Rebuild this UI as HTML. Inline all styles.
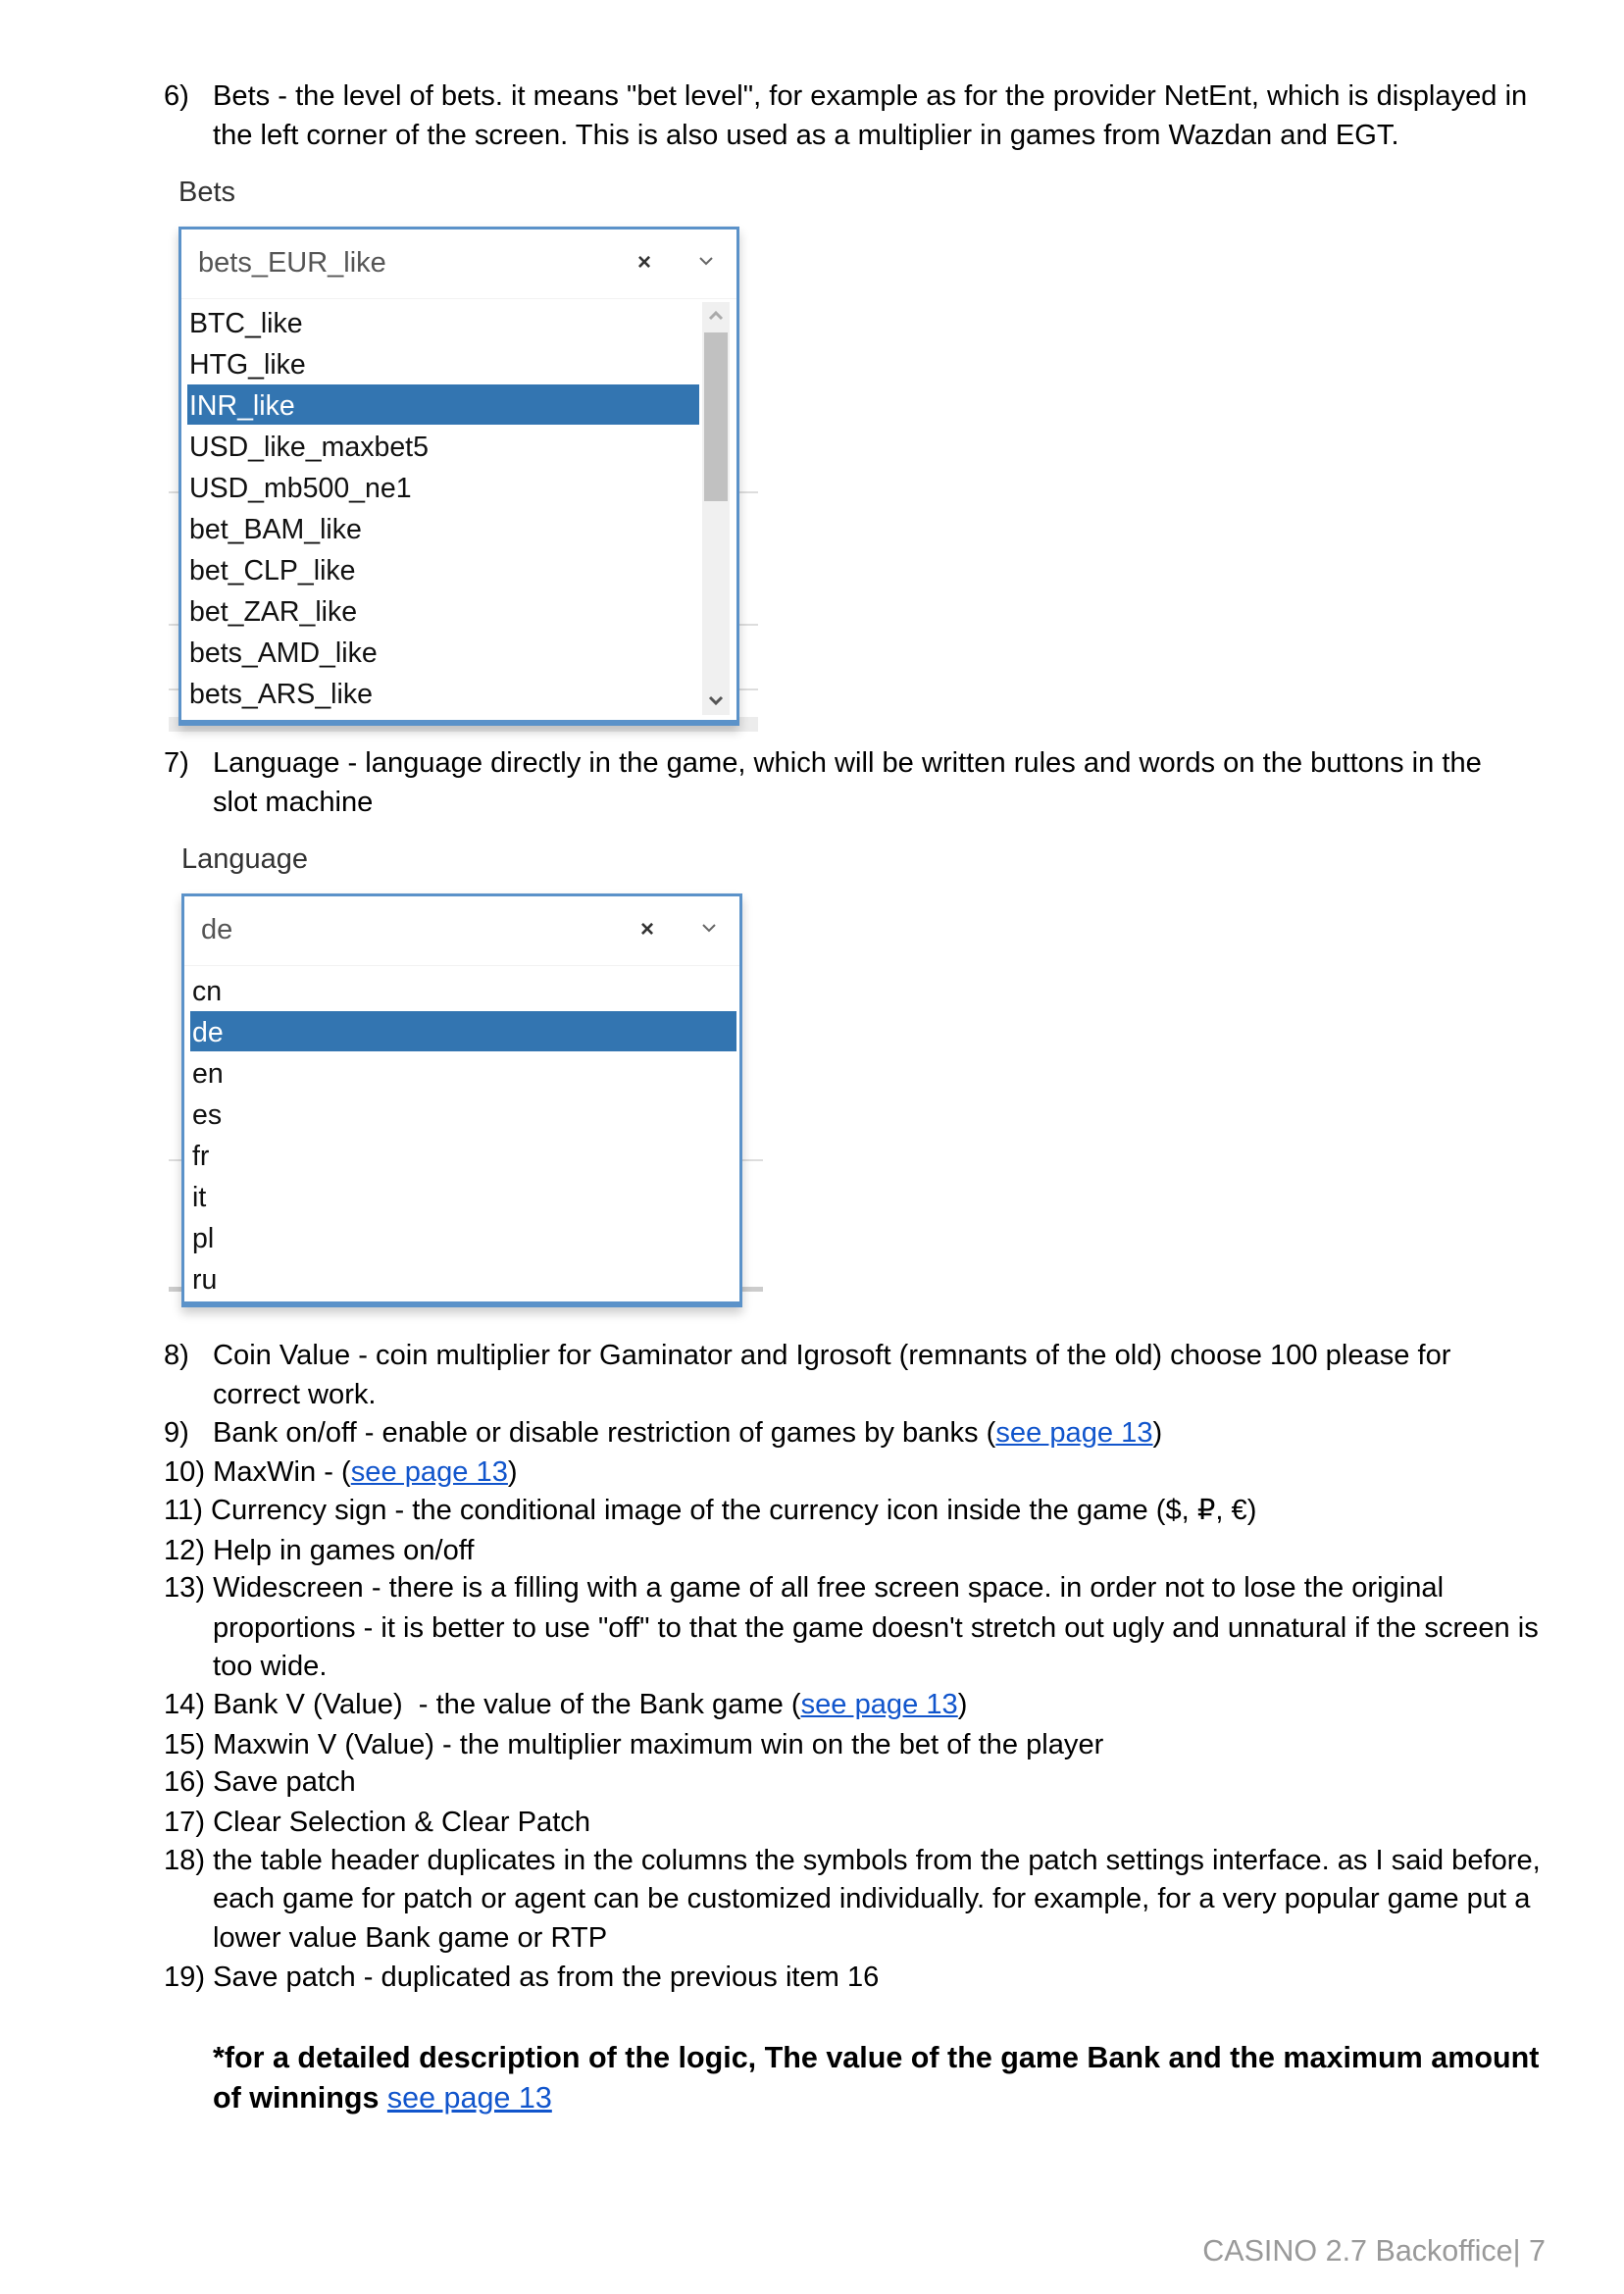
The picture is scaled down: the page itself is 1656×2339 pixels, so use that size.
<!DOCTYPE html>
<html><head><meta charset="utf-8"><style>
body{margin:0;width:1656px;height:2339px;background:#fff;position:relative;font-family:"Liberation Sans",Arial,sans-serif;color:#000;overflow:hidden}
.l{position:absolute;font-size:29.1px;line-height:40px;white-space:nowrap}
.n{left:167px}.t{left:217px}
a{color:#1155cc;text-decoration:underline}
.box{position:absolute;background:#fff;border:3px solid #5b92c9;border-bottom-width:6px;box-sizing:border-box;box-shadow:0 6px 10px rgba(0,0,0,.2)}
.hd{position:absolute;left:0;right:0;top:0;height:70px;border-bottom:1px solid #f2f2f2}
.hv{position:absolute;left:17px;font-size:29px;color:#555;line-height:40px}
.it{position:absolute;left:8px;font-size:28.5px;line-height:42px;color:#111;white-space:nowrap}
.hl{position:absolute;background:#3375b1}
.gl{position:absolute;background:#ddd;height:2px}
.lab{position:absolute;font-size:29px;color:#333;line-height:40px}
</style></head><body>

<div class="l n" style="top:78px">6)</div>
<div class="l t" style="top:78px">Bets - the level of bets. it means "bet level", for example as for the provider NetEnt, which is displayed in</div>
<div class="l t" style="top:118px">the left corner of the screen. This is also used as a multiplier in games from Wazdan and EGT.</div>

<div class="lab" style="left:182px;top:176px">Bets</div>
<div class="gl" style="left:172px;width:601px;top:501px"></div>
<div class="gl" style="left:172px;width:601px;top:636px"></div>
<div class="gl" style="left:172px;width:601px;top:702px"></div>
<div style="position:absolute;left:172px;width:601px;top:731px;height:15px;background:#ececec"></div>
<div class="box" style="left:182px;top:231px;width:572px;height:509px">
 <div class="hd"><div class="hv" style="top:14px">bets_EUR_like</div>
 <div style="position:absolute;left:465px;top:14px;font-size:24px;line-height:40px;color:#333;font-weight:bold">×</div>
 <svg style="position:absolute;left:527px;top:26px" width="16" height="12"><path d="M2 3l6 6 6-6" stroke="#666" stroke-width="2" fill="none"/></svg></div>
 <div class="hl" style="left:6px;top:158px;width:522px;height:41px"></div>
 <div style="position:absolute;left:531px;top:74px;width:28px;height:421px;background:#f0f0f0"></div>
 <div style="position:absolute;left:533px;top:105px;width:24px;height:172px;background:#c1c1c1"></div>
 <svg style="position:absolute;left:537px;top:82px" width="16" height="12"><path d="M2 9l6-6 6 6" stroke="#aaa" stroke-width="3" fill="none"/></svg>
 <svg style="position:absolute;left:537px;top:474px" width="16" height="12"><path d="M2 3l6 6 6-6" stroke="#555" stroke-width="3" fill="none"/></svg>
 <div class="it" style="top:75px">BTC_like</div>
 <div class="it" style="top:117px">HTG_like</div>
 <div class="it" style="top:159px;color:#fff">INR_like</div>
 <div class="it" style="top:201px">USD_like_maxbet5</div>
 <div class="it" style="top:243px">USD_mb500_ne1</div>
 <div class="it" style="top:285px">bet_BAM_like</div>
 <div class="it" style="top:327px">bet_CLP_like</div>
 <div class="it" style="top:369px">bet_ZAR_like</div>
 <div class="it" style="top:411px">bets_AMD_like</div>
 <div class="it" style="top:453px">bets_ARS_like</div>
</div>

<div class="l n" style="top:758px">7)</div>
<div class="l t" style="top:758px">Language - language directly in the game, which will be written rules and words on the buttons in the</div>
<div class="l t" style="top:798px">slot machine</div>

<div class="lab" style="left:185px;top:856px">Language</div>
<div class="gl" style="left:172px;width:606px;top:1182px"></div>
<div style="position:absolute;left:172px;width:606px;top:1312px;height:5px;background:#ccc"></div>
<div class="box" style="left:185px;top:911px;width:572px;height:422px">
 <div class="hd"><div class="hv" style="top:14px">de</div>
 <div style="position:absolute;left:465px;top:14px;font-size:24px;line-height:40px;color:#333;font-weight:bold">×</div>
 <svg style="position:absolute;left:527px;top:26px" width="16" height="12"><path d="M2 3l6 6 6-6" stroke="#666" stroke-width="2" fill="none"/></svg></div>
 <div class="hl" style="left:6px;top:117px;width:557px;height:41px"></div>
 <div class="it" style="top:76px">cn</div>
 <div class="it" style="top:118px;color:#fff">de</div>
 <div class="it" style="top:160px">en</div>
 <div class="it" style="top:202px">es</div>
 <div class="it" style="top:244px">fr</div>
 <div class="it" style="top:286px">it</div>
 <div class="it" style="top:328px">pl</div>
 <div class="it" style="top:370px">ru</div>
</div>

<div class="l n" style="top:1362px">8)</div>
<div class="l t" style="top:1362px">Coin Value - coin multiplier for Gaminator and Igrosoft (remnants of the old) choose 100 please for</div>
<div class="l t" style="top:1402px">correct work.</div>
<div class="l n" style="top:1441px">9)</div>
<div class="l t" style="top:1441px">Bank on/off - enable or disable restriction of games by banks (<a>see page 13</a>)</div>
<div class="l n" style="top:1481px">10) MaxWin - (<a>see page 13</a>)</div>
<div class="l n" style="top:1520px">11) Currency sign - the conditional image of the currency icon inside the game ($, ₽, €)</div>
<div class="l n" style="top:1561px">12) Help in games on/off</div>
<div class="l n" style="top:1599px">13) Widescreen - there is a filling with a game of all free screen space. in order not to lose the original</div>
<div class="l t" style="top:1640px">proportions - it is better to use "off" to that the game doesn't stretch out ugly and unnatural if the screen is</div>
<div class="l t" style="top:1679px">too wide.</div>
<div class="l n" style="top:1718px">14) Bank V (Value)&nbsp; - the value of the Bank game (<a>see page 13</a>)</div>
<div class="l n" style="top:1759px">15) Maxwin V (Value) - the multiplier maximum win on the bet of the player</div>
<div class="l n" style="top:1797px">16) Save patch</div>
<div class="l n" style="top:1838px">17) Clear Selection &amp; Clear Patch</div>
<div class="l n" style="top:1877px">18) the table header duplicates in the columns the symbols from the patch settings interface. as I said before,</div>
<div class="l t" style="top:1916px">each game for patch or agent can be customized individually. for example, for a very popular game put a</div>
<div class="l t" style="top:1956px">lower value Bank game or RTP</div>
<div class="l n" style="top:1996px">19) Save patch - duplicated as from the previous item 16</div>

<div class="l t" style="top:2078px;font-weight:bold;font-size:30.5px">*for a detailed description of the logic, The value of the game Bank and the maximum amount</div>
<div class="l t" style="top:2119px;font-size:30.5px"><b>of winnings</b> <a>see page 13</a></div>

<div class="l" style="right:80px;top:2275px;color:#999;font-size:30.5px">CASINO 2.7 Backoffice| 7</div>
</body></html>
